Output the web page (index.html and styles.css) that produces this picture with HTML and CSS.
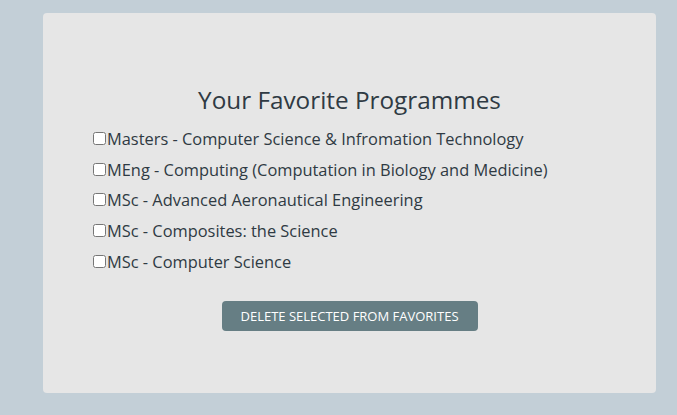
FILE: index.html
```html
<!DOCTYPE html>
<html>
<head>
<meta charset="utf-8">
<link rel="stylesheet" href="styles.css">
</head>
<body>
<div class="card">
  <h1 class="title">Your Favorite Programmes</h1>
  <ul class="list">
    <li class="item"><input type="checkbox" class="check"><span>Masters - Computer Science &amp; Infromation Technology</span></li>
    <li class="item"><input type="checkbox" class="check"><span>MEng - Computing (Computation in Biology and Medicine)</span></li>
    <li class="item"><input type="checkbox" class="check"><span>MSc - Advanced Aeronautical Engineering</span></li>
    <li class="item"><input type="checkbox" class="check"><span>MSc - Composites: the Science</span></li>
    <li class="item"><input type="checkbox" class="check"><span>MSc - Computer Science</span></li>
  </ul>
  <div class="actions">
    <button class="btn">DELETE SELECTED FROM FAVORITES</button>
  </div>
</div>
</body>
</html>
```

FILE: styles.css
```css
html, body {
  margin: 0;
  padding: 0;
}
body {
  background: #c3cfd7;
  width: 677px;
  height: 415px;
  padding: 13px 0 0 43px;
  box-sizing: border-box;
  font-family: "Open Sans", "Noto Sans", sans-serif;
  color: #2f3a43;
}
.card {
  width: 613px;
  height: 380px;
  background: #e6e6e6;
  border-radius: 4px;
  padding: 72px 0 0 50px;
  box-sizing: border-box;
}
.title {
  margin: 0 0 8px -50px;
  font-size: 24.3px;
  font-weight: 500;
  text-align: center;
  line-height: 30px;
  color: #2f3a43;
}
.list {
  list-style: none;
  margin: 0;
  padding: 0;
}
.item {
  display: flex;
  align-items: center;
  height: 30.75px;
  font-size: 16.4px;
  font-weight: 500;
}
.check {
  width: 13px;
  height: 13px;
  margin: 0 1px 0 0;
}
.actions {
  display: flex;
  justify-content: center;
  margin: 24px 0 0 -50px;
}
.btn {
  width: 256px;
  height: 30px;
  background: #667e84;
  color: #ffffff;
  border: none;
  border-radius: 4px;
  font-family: "Open Sans", "Noto Sans", sans-serif;
  font-size: 13px;
  padding: 0;
}
```
